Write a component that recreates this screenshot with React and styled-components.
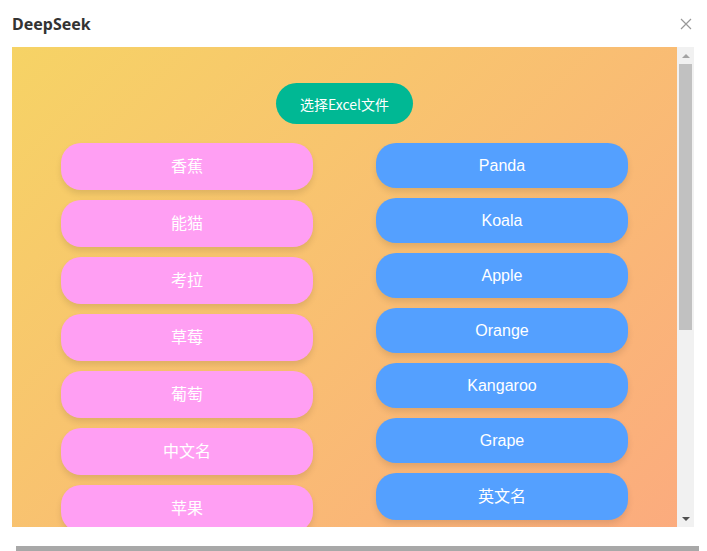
import React from "react";
import styled, { createGlobalStyle } from "styled-components";

const GlobalStyle = createGlobalStyle`
  html, body {
    margin: 0;
    padding: 0;
    background: #fff;
  }
  body {
    font-family: "Noto Sans", "Noto Sans CJK SC", sans-serif;
  }
  * {
    box-sizing: border-box;
  }
`;

const chinese = ["香蕉", "能猫", "考拉", "草莓", "葡萄", "中文名", "苹果"];
const english = ["Panda", "Koala", "Apple", "Orange", "Kangaroo", "Grape", "英文名"];

const isCjk = (text) => /[\u4e00-\u9fff]/.test(text);

const Page = styled.div`
  height: 551px;
  display: flex;
  flex-direction: column;
  overflow: hidden;
`;

const Dialog = styled.div`
  height: 546px;
  flex-shrink: 0;
  background: #fff;
  border-radius: 0 0 8px 8px;
  padding: 0 13px 0 12px;
  display: flex;
  flex-direction: column;
`;

const Backdrop = styled.div`
  height: 5px;
  margin: 0 8px 0 16px;
  background: #a8a8a8;
`;

const Header = styled.div`
  height: 47px;
  flex-shrink: 0;
  display: flex;
  align-items: center;
  justify-content: space-between;
`;

const Title = styled.h2`
  margin: 0;
  font-family: "Noto Sans", sans-serif;
  font-size: 16px;
  font-weight: 700;
  color: #333;
`;

const CloseButton = styled.button`
  width: 12px;
  height: 12px;
  margin: 1px 2px 0 0;
  padding: 0;
  border: none;
  background: none;
  color: #999;
  display: flex;
  cursor: pointer;
`;

const Frame = styled.div`
  height: 480px;
  flex-shrink: 0;
  display: flex;
`;

const Viewport = styled.div`
  flex: 1;
  overflow: hidden;
`;

const Rail = styled.div`
  width: 17px;
  background: #f1f1f1;
  display: flex;
  flex-direction: column;
`;

const RailArrow = styled.div`
  height: 17px;
  display: flex;
  align-items: center;
  justify-content: center;
  color: ${(p) => (p.$active ? "#505050" : "#a3a3a3")};
`;

const Track = styled.div`
  flex: 1;
  padding: 0 2px;
`;

const Thumb = styled.div`
  height: 266px;
  background: #c1c1c1;
`;

const Board = styled.div`
  min-height: 805px;
  background: linear-gradient(135deg, #f6d365 0%, #fda085 100%);
  padding: 36px 0 36px;
  display: flex;
  flex-direction: column;
  align-items: center;
`;

const PickButton = styled.button`
  height: 41px;
  padding: 0 24px;
  border: none;
  border-radius: 21px;
  background: #00b894;
  color: #fff;
  font-family: "Noto Sans CJK SC", sans-serif;
  font-size: 14px;
  cursor: pointer;
`;

const Columns = styled.div`
  margin-top: 19px;
  display: flex;
  justify-content: center;
  align-items: flex-start;
  gap: 63px;
  width: 100%;
`;

const Column = styled.div`
  width: 252px;
  display: flex;
  flex-direction: column;
  gap: 10px;
`;

const Card = styled.div`
  padding: 12px 10px;
  border-radius: 20px;
  background: ${(p) => (p.$tone === "pink" ? "#ff9ff3" : "#54a0ff")};
  color: #fff;
  text-align: center;
  font-family: "Liberation Sans", "Noto Sans CJK SC", sans-serif;
  font-size: 16px;
  line-height: ${(p) => (p.$cjk ? "23px" : "21px")};
  box-shadow: 0 4px 6px rgba(0, 0, 0, 0.1);
  cursor: pointer;
`;

const App = () => (
  <Page>
    <GlobalStyle />
    <Dialog>
      <Header>
        <Title>DeepSeek</Title>
        <CloseButton aria-label="close">
          <svg width="12" height="12" viewBox="0 0 12 12">
            <path d="M1 1L11 11M11 1L1 11" stroke="currentColor" strokeWidth="1.2" />
          </svg>
        </CloseButton>
      </Header>
      <Frame>
        <Viewport>
          <Board>
            <PickButton>选择Excel文件</PickButton>
            <Columns>
              <Column>
                {chinese.map((word) => (
                  <Card key={word} $tone="pink" $cjk={isCjk(word)}>
                    {word}
                  </Card>
                ))}
              </Column>
              <Column>
                {english.map((word) => (
                  <Card key={word} $tone="blue" $cjk={isCjk(word)}>
                    {word}
                  </Card>
                ))}
              </Column>
            </Columns>
          </Board>
        </Viewport>
        <Rail>
          <RailArrow>
            <svg width="8" height="4" viewBox="0 0 8 4">
              <path d="M0 4L4 0L8 4Z" fill="currentColor" />
            </svg>
          </RailArrow>
          <Track>
            <Thumb />
          </Track>
          <RailArrow $active>
            <svg width="8" height="4" viewBox="0 0 8 4">
              <path d="M0 0L8 0L4 4Z" fill="currentColor" />
            </svg>
          </RailArrow>
        </Rail>
      </Frame>
    </Dialog>
    <Backdrop />
  </Page>
);

export default App;
